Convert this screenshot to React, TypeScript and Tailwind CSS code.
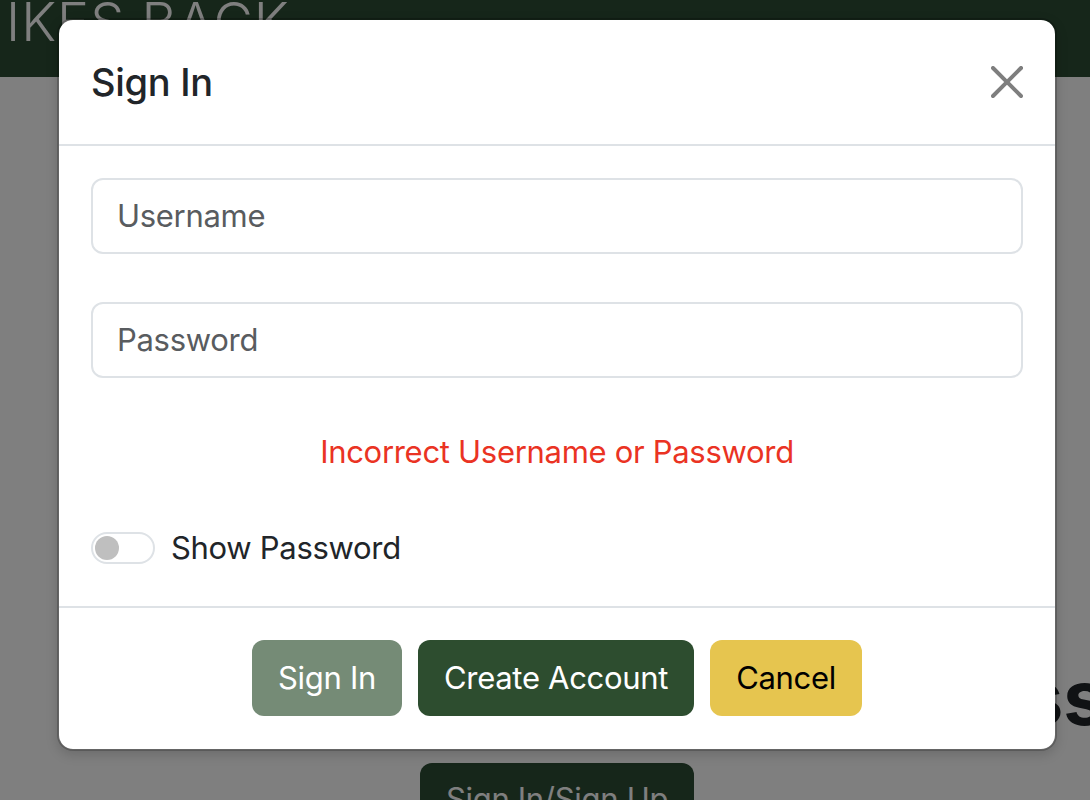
import { useState } from "react"

// Bootstrap-style close glyph
function CloseIcon() {
  return (
    <svg viewBox="0 0 16 16" className="h-[32px] w-[32px] opacity-50" fill="#000">
      <path d="M.293.293a1 1 0 0 1 1.414 0L8 6.586 14.293.293a1 1 0 1 1 1.414 1.414L9.414 8l6.293 6.293a1 1 0 0 1-1.414 1.414L8 9.414l-6.293 6.293a1 1 0 0 1-1.414-1.414L6.586 8 .293 1.707a1 1 0 0 1 0-1.414z" />
    </svg>
  )
}

export default function App() {
  const [showPassword, setShowPassword] = useState(false)

  return (
    <div className="relative h-[800px] w-[1090px] overflow-hidden bg-white font-['Inter','Noto_Sans',sans-serif] text-[#212529]">
      {/* Page behind the modal */}
      <header className="flex h-[77px] items-end bg-[#2c4c34] pl-[6px]">
        <span className="mb-[28px] whitespace-nowrap text-[54px] font-light leading-none tracking-[1px] text-white">
          IKES BACK
        </span>
      </header>

      <main>
        <h1 className="mt-[575px] whitespace-nowrap pl-[831px] text-[76px] font-bold leading-[91px] text-[#212529]">
          Access
        </h1>
        <div className="mt-[20px] flex justify-center pl-[24px]">
          <button className="rounded-[12px] bg-[#2c4c34] px-[26px] py-[12px] text-[31px] leading-[48px] tracking-[-0.3px] text-white">
            Sign In/Sign Up
          </button>
        </div>
      </main>

      {/* Backdrop + modal */}
      <div className="absolute inset-0 bg-black/50">
        <div className="ml-[57px] mt-[18px] w-[1000px] rounded-[16px] border-2 border-black/20 bg-white bg-clip-padding shadow-[0_4px_12px_rgba(0,0,0,0.15)]">
          {/* Header */}
          <div className="flex items-center justify-between border-b-2 border-[#dee2e6] px-[32px] py-[32px]">
            <h5 className="text-[38px] font-medium leading-[60px] tracking-[-0.3px] text-[#212529]">Sign In</h5>
            <button aria-label="Close" className="flex items-center">
              <CloseIcon />
            </button>
          </div>

          {/* Body */}
          <div className="px-[32px] pb-[34px] pt-[32px]">
            <input
              type="text"
              placeholder="Username"
              className="mb-[48px] block w-full rounded-[12px] border-2 border-[#dee2e6] px-[24px] py-[12px] text-[31px] leading-[48px] tracking-[-0.3px] text-[#212529] outline-none placeholder:text-[#595c5f]"
            />
            <input
              type={showPassword ? "text" : "password"}
              placeholder="Password"
              className="mb-[50px] block w-full rounded-[12px] border-2 border-[#dee2e6] px-[24px] py-[12px] text-[31px] leading-[48px] tracking-[-0.3px] text-[#212529] outline-none placeholder:text-[#595c5f]"
            />
            <p className="mb-[48px] text-center text-[31px] leading-[48px] tracking-[-0.3px] text-[#ea3323]">
              Incorrect Username or Password
            </p>
            <label className="flex h-[48px] cursor-pointer items-center gap-[16px]">
              <button
                type="button"
                onClick={() => setShowPassword(!showPassword)}
                className="flex h-[32px] w-[64px] items-center rounded-full border-2 border-[#dee2e6] px-[2px]"
              >
                <span className="h-[24px] w-[24px] rounded-full bg-[#bfbfbf]" />
              </button>
              <span className="text-[31px] leading-[48px] tracking-[-0.3px] text-[#212529]">Show Password</span>
            </label>
          </div>

          {/* Footer */}
          <div className="flex items-center justify-center gap-[16px] border-t-2 border-[#dee2e6] px-[22px] pb-[33px] pt-[32px]">
            <button className="rounded-[12px] bg-[#758b76] px-[26px] py-[14px] text-[31px] leading-[48px] tracking-[-0.3px] text-white">
              Sign In
            </button>
            <button className="rounded-[12px] bg-[#2d4d2f] px-[26px] py-[14px] text-[31px] leading-[48px] tracking-[-0.3px] text-white">
              Create Account
            </button>
            <button className="rounded-[12px] bg-[#e6c54f] px-[26px] py-[14px] text-[31px] leading-[48px] tracking-[-0.3px] text-black">
              Cancel
            </button>
          </div>
        </div>
      </div>
    </div>
  )
}
